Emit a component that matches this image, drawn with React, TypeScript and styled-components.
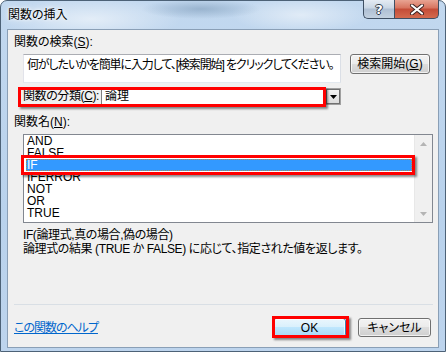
import styled, { createGlobalStyle } from "styled-components"

const GlobalStyle = createGlobalStyle`
  html, body {
    margin: 0;
    padding: 0;
    overflow: hidden;
    background: #ffffff;
  }
  body {
    font-family: "Liberation Sans", "Noto Sans CJK JP", sans-serif;
    font-size: 12px;
    font-feature-settings: "palt" 1;
    color: #000000;
  }
`

const functions = ["AND", "FALSE", "IF", "IFERROR", "NOT", "OR", "TRUE"]
const selected = "IF"

export default function App() {
  return (
    <>
      <GlobalStyle />
      <Window>
        <TitleBar>
          <Title>関数の挿入</Title>
          <CaptionButtons>
            <HelpButton>?</HelpButton>
            <CloseButton>
              <svg width="16" height="11" viewBox="0 0 16 11">
                <path d="M3 1.5 L13 9.5 M13 1.5 L3 9.5" stroke="#3a2020" strokeWidth="4" strokeLinecap="round" />
                <path d="M3 1.5 L13 9.5 M13 1.5 L3 9.5" stroke="#ffffff" strokeWidth="2.2" strokeLinecap="round" />
              </svg>
            </CloseButton>
          </CaptionButtons>
        </TitleBar>

        <Client>
          <SectionLabel>
            関数の検索(<u>S</u>):
          </SectionLabel>
          <SearchRow>
            <SearchBox>何がしたいかを簡単に入力して、[検索開始] をクリックしてください。</SearchBox>
            <PushButton $width={80} $height={20}>
              検索開始(<u>G</u>)
            </PushButton>
          </SearchRow>

          <CategoryRow $inset="-1px 15px -2px -5px">
            <CategoryLabel>
              関数の分類(<u>C</u>):
            </CategoryLabel>
            <Combo>
              <ComboValue>論理</ComboValue>
              <ComboArrow>
                <svg width="7" height="4" viewBox="0 0 7 4">
                  <path d="M0 0 H7 L3.5 4 Z" fill="#000000" />
                </svg>
              </ComboArrow>
            </Combo>
          </CategoryRow>

          <NameLabel>
            関数名(<u>N</u>):
          </NameLabel>
          <ListBox>
            <Rows>
              {functions.map((name) =>
                name === selected ? (
                  <Marked key={name} $inset="-4px -3px -4px -5px">
                    <Row $selected>{name}</Row>
                  </Marked>
                ) : (
                  <Row key={name}>{name}</Row>
                )
              )}
            </Rows>
            <ScrollBar>
              <ScrollArrow>
                <svg width="7" height="4" viewBox="0 0 7 4">
                  <path d="M0 4 H7 L3.5 0 Z" fill="#b4b4b4" />
                </svg>
              </ScrollArrow>
              <ScrollArrow>
                <svg width="7" height="4" viewBox="0 0 7 4">
                  <path d="M0 0 H7 L3.5 4 Z" fill="#b4b4b4" />
                </svg>
              </ScrollArrow>
            </ScrollBar>
          </ListBox>

          <Description>
            <div>IF(論理式,真の場合,偽の場合)</div>
            <div>論理式の結果 (TRUE か FALSE) に応じて、指定された値を返します。</div>
          </Description>

          <Separator />
          <Footer>
            <HelpLink href="#">この関数のヘルプ</HelpLink>
            <Buttons>
              <Marked $inset="-2px -3px -1px -1px">
                <PushButton $width={73} $height={19} $default>
                  OK
                </PushButton>
              </Marked>
              <PushButton $width={73} $height={19}>
                キャンセル
              </PushButton>
            </Buttons>
          </Footer>
        </Client>
      </Window>
    </>
  )
}

const Window = styled.div`
  box-sizing: border-box;
  width: 446px;
  height: 352px;
  display: flex;
  flex-direction: column;
  border: 1px solid #4d6277;
  border-radius: 7px 7px 0 0;
  background:
    radial-gradient(ellipse 60px 10px at 200px 8px, rgba(120, 150, 180, 0.55), transparent),
    radial-gradient(ellipse 90px 22px at 90px 18px, rgba(255, 255, 255, 0.55), transparent),
    radial-gradient(ellipse 70px 18px at 300px 14px, rgba(255, 255, 255, 0.5), transparent),
    linear-gradient(180deg, #c2d8ef 0%, #b9d2ec 60%, #bdd4ed 100%);
`

const TitleBar = styled.div`
  height: 28px;
  display: flex;
  align-items: flex-start;
`

const Title = styled.div`
  margin: 6px 0 0 7px;
  line-height: 14px;
  font-family: "Noto Sans CJK JP", sans-serif;
  font-size: 12px;
  text-shadow: 0 0 6px #ffffff, 0 0 3px #ffffff;
`

const CaptionButtons = styled.div`
  display: flex;
  margin: -1px 6px 0 auto;
`

const CaptionButton = styled.div`
  box-sizing: border-box;
  height: 19px;
  display: flex;
  align-items: center;
  justify-content: center;
  border: 1px solid #3e4f63;
  border-top: none;
`

const HelpButton = styled(CaptionButton)`
  width: 31px;
  border-right: none;
  border-bottom-left-radius: 5px;
  background: linear-gradient(180deg, #e4ebf3 0%, #c9d6e4 45%, #aebfd3 50%, #c3d1e0 100%);
  color: #ffffff;
  font-family: "DejaVu Sans", sans-serif;
  font-weight: bold;
  font-size: 13px;
  text-shadow: 1px 0 0 #2f3b4b, -1px 0 0 #2f3b4b, 0 1px 0 #2f3b4b, 0 -1px 0 #2f3b4b;
`

const CloseButton = styled(CaptionButton)`
  width: 45px;
  border-bottom-right-radius: 5px;
  background: linear-gradient(180deg, #e8a493 0%, #d7735e 45%, #c44c37 50%, #d46a4e 100%);
`

const Client = styled.div`
  box-sizing: border-box;
  height: 319px;
  margin: 0 6px;
  display: flex;
  flex-direction: column;
  background: #f0f0f0;
  border: 1px solid #8a9fb6;
`

const SectionLabel = styled.div`
  padding: 5px 0 0 6px;
  line-height: 14px;
`

const SearchRow = styled.div`
  display: flex;
  align-items: flex-start;
  margin-top: 5px;
  padding-left: 15px;
`

const SearchBox = styled.div`
  box-sizing: border-box;
  width: 318px;
  height: 29px;
  padding: 3px 0 0 3px;
  line-height: 14px;
  letter-spacing: -1.1px;
  white-space: nowrap;
  overflow: hidden;
  background: #ffffff;
  border: 1px solid #abadb3;
  border-color: #abadb3 #dbdfe6 #e3e9ef #e2e3ea;
`

const PushButton = styled.div<{ $width: number; $height: number; $default?: boolean }>`
  box-sizing: border-box;
  width: ${(p) => p.$width}px;
  height: ${(p) => p.$height}px;
  display: flex;
  align-items: center;
  justify-content: center;
  white-space: nowrap;
  border: 1px solid ${(p) => (p.$default ? "#3c7fb1" : "#707070")};
  border-radius: 3px;
  background: ${(p) =>
    p.$default
      ? "linear-gradient(180deg, #eaf6fd 0%, #d9f0fc 48%, #bee6fd 50%, #a7d9f5 100%)"
      : "linear-gradient(180deg, #f2f2f2 0%, #ebebeb 48%, #dddddd 50%, #cfcfcf 100%)"};
  box-shadow: inset 0 0 0 1px rgba(255, 255, 255, 0.7);
  line-height: 14px;
  ${SearchRow} & {
    margin-left: 9px;
  }
`

const Marked = styled.div<{ $inset: string }>`
  position: relative;
  &::after {
    content: "";
    position: absolute;
    inset: ${(p) => p.$inset};
    border: 3px solid #ff0000;
    box-shadow: 2px 2px 2px rgba(0, 0, 0, 0.45);
    pointer-events: none;
  }
`

const CategoryRow = styled(Marked)`
  display: flex;
  width: 318px;
  height: 17px;
  margin: 5px 0 0 15px;
`

const CategoryLabel = styled.div`
  width: 78px;
  line-height: 17px;
  white-space: nowrap;
  letter-spacing: -0.4px;
`

const Combo = styled.div`
  box-sizing: border-box;
  flex: 1;
  display: flex;
  background: #ffffff;
  border: 1px solid #a0a0a0;
  border-left-color: #808080;
`

const ComboValue = styled.div`
  flex: 1;
  padding-left: 3px;
  line-height: 15px;
`

const ComboArrow = styled.div`
  box-sizing: border-box;
  width: 14px;
  display: flex;
  align-items: center;
  justify-content: center;
  background: linear-gradient(180deg, #f4f4f4, #dcdcdc);
  border: 1px solid #707070;
`

const NameLabel = styled.div`
  margin-top: 10px;
  padding-left: 6px;
  line-height: 14px;
`

const ListBox = styled.div`
  box-sizing: border-box;
  width: 410px;
  height: 89px;
  margin: 5px 0 0 15px;
  display: flex;
  background: #ffffff;
  border: 1px solid #828790;
`

const Rows = styled.div`
  flex: 1;
  display: flex;
  flex-direction: column;
  padding: 0 2px;
`

const Row = styled.div<{ $selected?: boolean }>`
  box-sizing: border-box;
  height: 12px;
  line-height: 12px;
  padding-left: 1px;
  color: ${(p) => (p.$selected ? "#ffffff" : "#000000")};
  background: ${(p) => (p.$selected ? "#3399ff" : "transparent")};
  outline: ${(p) => (p.$selected ? "1px dotted #b08a50" : "none")};
  outline-offset: -1px;
`

const ScrollBar = styled.div`
  width: 17px;
  display: flex;
  flex-direction: column;
  justify-content: space-between;
  background: #f0f0f0;
  border-left: 1px solid #e8e8e8;
`

const ScrollArrow = styled.div`
  height: 17px;
  display: flex;
  align-items: center;
  justify-content: center;
`

const Description = styled.div`
  margin-top: 5px;
  padding-left: 15px;
  line-height: 14px;
  letter-spacing: -0.4px;
`

const Separator = styled.div`
  height: 1px;
  margin: auto 5px 0 6px;
  background: #d9dfe5;
`

const Footer = styled.div`
  display: flex;
  align-items: center;
  padding: 13px 7px 10px 6px;
`

const HelpLink = styled.a`
  color: #0066cc;
  text-decoration: underline;
  line-height: 14px;
  letter-spacing: -1px;
`

const Buttons = styled.div`
  display: flex;
  gap: 12px;
  margin-left: auto;
`
